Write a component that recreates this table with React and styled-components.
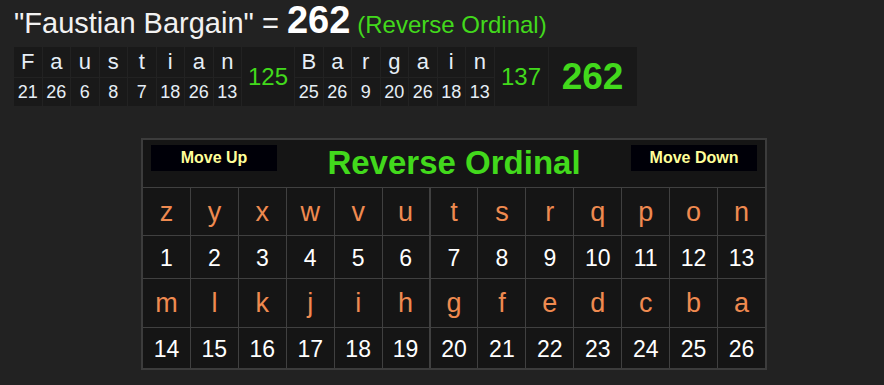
import React from 'react'
import styled, { createGlobalStyle } from "styled-components";

const GlobalStyle = createGlobalStyle`
  body {
    margin: 0;
    background: #222222;
    font-family: "Liberation Sans", Arial, sans-serif;
  }
`

const GREEN = "#42d91c";
const ORANGE = "#ef8a50";

const Page = styled.div`
  padding: 0 12px 14px 14px;
  width: 884px;
  height: 385px;
  box-sizing: border-box;
`

const Title = styled.div`
  display: flex;
  align-items: baseline;
  height: 40px;
  color: #f2f2f2;
  font-size: 29px;
  line-height: 40px;
  white-space: pre;
`
const TitleSum = styled.span`
  font-size: 38px;
  font-weight: bold;
  color: #ffffff;
`
const TitleCipher = styled.span`
  font-size: 24px;
  color: ${GREEN};
  margin-left: 7px;
`

const Breakdown = styled.div`
  display: inline-flex;
  gap: 1px;
  margin-top: 7px;
  background: #222222;
`
const LetterCol = styled.div`
  display: grid;
  grid-template-rows: 30px 28px;
  row-gap: 1px;
  width: 27.5px;
`
const LetterCell = styled.div`
  display: flex;
  align-items: center;
  justify-content: center;
  background: #191919;
  color: #e6eef6;
  font-size: ${(props) => (props.$num ? "18px" : "22px")};
`
const TotalCell = styled.div`
  display: flex;
  align-items: center;
  justify-content: center;
  width: ${(props) => props.$w}px;
  background: #191919;
  color: ${GREEN};
  font-size: ${(props) => (props.$big ? "37px" : "24px")};
  font-weight: ${(props) => (props.$big ? "bold" : "normal")};
`

const Panel = styled.div`
  margin: 32px 0 0 127px;
  width: 626px;
  box-sizing: border-box;
  border: 2px solid #3c3c3c;
  background: #151515;
`
const PanelHeader = styled.div`
  display: flex;
  align-items: flex-start;
  justify-content: space-between;
  height: 48px;
  padding: 5px 8px 0 8px;
  box-sizing: border-box;
  border-bottom: 1px solid #404040;
`
const MoveButton = styled.button`
  width: 126px;
  height: 26px;
  border: none;
  background: #000008;
  color: #ffff99;
  font-family: "Liberation Sans", Arial, sans-serif;
  font-size: 16px;
  font-weight: bold;
  padding: 0;
`
const CipherName = styled.div`
  color: ${GREEN};
  font-size: 33px;
  font-weight: bold;
  line-height: 46px;
  margin-top: -5px;
`
const Grid = styled.div`
  display: grid;
  grid-template-columns: repeat(13, 1fr);
  grid-template-rows: 47px 42px 48px 40px;
  column-gap: 1px;
  row-gap: 1px;
  background: #404040;
`
const GridCell = styled.div`
  display: flex;
  align-items: center;
  justify-content: center;
  padding-top: ${(props) => (props.$letter ? "1px" : "2px")};
  background: #151515;
  border-right: ${(props) => (props.$split ? "1px solid #404040" : "none")};
  color: ${(props) => (props.$letter ? ORANGE : "#ffffff")};
  font-size: ${(props) => (props.$letter ? "27px" : "23px")};
`

const reverse = (ch) => 27 - (ch.toLowerCase().charCodeAt(0) - 96);

const words = ["Faustian", "Bargain"];
const alphabet = "zyxwvutsrqponmlkjihgfedcba".split("");

export default function App() {
  const sums = words.map((w) => w.split("").reduce((s, c) => s + reverse(c), 0));
  const total = sums.reduce((a, b) => a + b, 0);
  const halves = [alphabet.slice(0, 13), alphabet.slice(13)];

  return (
    <Page>
      <GlobalStyle />
      <Title>
        {'"Faustian Bargain" = '}
        <TitleSum>{total}</TitleSum>
        <TitleCipher>(Reverse Ordinal)</TitleCipher>
      </Title>
      <Breakdown>
        {words.map((w, wi) => (
          <React.Fragment key={w}>
            {w.split("").map((c, i) => (
              <LetterCol key={i}>
                <LetterCell>{c}</LetterCell>
                <LetterCell $num>{reverse(c)}</LetterCell>
              </LetterCol>
            ))}
            <TotalCell $w={wi === 0 ? 52 : 53}>{sums[wi]}</TotalCell>
          </React.Fragment>
        ))}
        <TotalCell $w={88} $big>{total}</TotalCell>
      </Breakdown>
      <Panel>
        <PanelHeader>
          <MoveButton>Move Up</MoveButton>
          <CipherName>Reverse Ordinal</CipherName>
          <MoveButton>Move Down</MoveButton>
        </PanelHeader>
        <Grid>
          {halves.map((row, ri) => (
            <React.Fragment key={ri}>
              {row.map((c, i) => (
                <GridCell key={"l" + c} $letter $split={i === 5}>{c}</GridCell>
              ))}
              {row.map((c, i) => (
                <GridCell key={"n" + c} $split={i === 5}>{reverse(c)}</GridCell>
              ))}
            </React.Fragment>
          ))}
        </Grid>
      </Panel>
    </Page>
  )
}
